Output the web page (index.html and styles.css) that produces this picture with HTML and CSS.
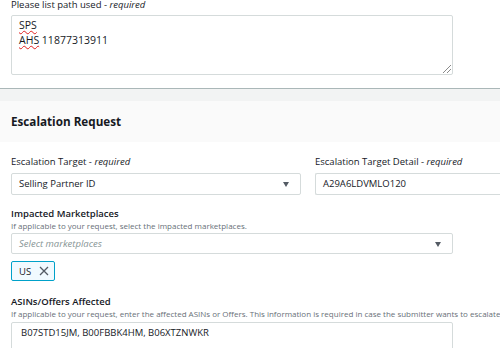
FILE: index.html
```html
<!DOCTYPE html>
<html lang="en">
<head>
    <meta charset="UTF-8">
    <title>Escalation</title>
    <link rel="stylesheet" href="styles.css">
</head>
<body>
<div class="top">
    <div class="label first">Please list path used - <i>required</i></div>
    <div class="textarea">
        <span class="typo">SPS</span><br>
        <span class="typo">AHS</span> 11877313911
        <span class="grip"></span>
    </div>
</div>
<div class="gap"></div>
<div class="panel">
    <div class="head">Escalation Request</div>
    <div class="body">
        <div class="row">
            <div class="field">
                <div class="label">Escalation Target - <i>required</i></div>
                <div class="select">Selling Partner ID<span class="caret"></span></div>
            </div>
            <div class="field detail">
                <div class="label">Escalation Target Detail - <i>required</i></div>
                <div class="input">A29A6LDVMLO120</div>
            </div>
        </div>
        <div class="label bold">Impacted Marketplaces</div>
        <div class="desc">If applicable to your request, select the impacted marketplaces.</div>
        <div class="select wide placeholder">Select marketplaces<span class="caret"></span></div>
        <div class="token">US
            <svg width="10" height="10" viewBox="0 0 10 10"><path d="M1 1L9 9M9 1L1 9" stroke="#545b64" stroke-width="1.3"/></svg>
        </div>
        <div class="label bold">ASINs/Offers Affected</div>
        <div class="desc">If applicable to your request, enter the affected ASINs or Offers. This information is required in case the submitter wants to escalate</div>
        <div class="input wide">B07STD15JM, B00FBBK4HM, B06XTZNWKR</div>
    </div>
</div>
</body>
</html>
```
FILE: styles.css
```css
body{
    margin: 0;
    background: #fff;
    font-family: "Open Sans", "Noto Sans", sans-serif;
    font-size: 9.5px;
    color: #16191f;
    overflow: hidden;
}
.top{
    padding: 0 11px;
    height: 88px;
    border-bottom: 1px solid #aab7b8;
}
.label{
    line-height: 12px;
    height: 12px;
    margin-top: -1px;
    white-space: nowrap;
}
.label.first{
    line-height: 10px;
    height: 10px;
    margin-top: 0;
}
.label i{
    font-style: italic;
}
.bold{
    font-weight: 600;
}
.textarea{
    position: relative;
    box-sizing: border-box;
    width: 442px;
    height: 60px;
    margin-top: 5px;
    border: 1px solid #d5dbdb;
    border-radius: 2px;
    padding: 2px 7px;
    font-size: 10.5px;
    line-height: 15px;
}
.typo{
    text-decoration: underline wavy #e02020;
    text-decoration-thickness: 1px;
    text-underline-offset: 1px;
}
.grip{
    position: absolute;
    right: 1px;
    bottom: 1px;
    width: 10px;
    height: 10px;
    background: repeating-linear-gradient(135deg, transparent 0 2px, #8a8a8a 2px 3px);
    clip-path: polygon(100% 0, 100% 100%, 0 100%);
}
.gap{
    height: 12px;
    background: #f2f3f3;
}
.panel{
    background: #fff;
    overflow: hidden;
}
.head{
    height: 41px;
    line-height: 41px;
    padding: 0 11px;
    background: #fafafa;
    font-size: 11.7px;
    font-weight: 700;
}
.body{
    padding: 14px 11px 0;
}
.row{
    display: flex;
    gap: 14px;
}
.field{
    width: 290px;
    flex: none;
}
.field.detail{
    width: 200px;
}
.select,
.input{
    position: relative;
    box-sizing: border-box;
    height: 22px;
    line-height: 20px;
    margin-top: 5px;
    border: 1px solid #d5dbdb;
    border-radius: 2px;
    padding: 0 7px;
    white-space: nowrap;
}
.input{
    border-right: none;
}
.wide{
    width: 442px;
}
.input.wide{
    border-right: 1px solid #d5dbdb;
    height: 30px;
    margin-top: 2px;
    padding: 0 9px;
}
.caret{
    position: absolute;
    right: 11px;
    top: 8px;
    border-left: 3px solid transparent;
    border-right: 3px solid transparent;
    border-top: 5px solid #545b64;
}
.placeholder{
    color: #879596;
    font-style: italic;
    margin-top: 1px;
    height: 21px;
}
.row .label{
    margin-top: 0;
}
.row + .label{
    margin-top: 13px;
}
.desc{
    font-size: 8px;
    line-height: 12px;
    color: #687078;
    white-space: nowrap;
}
.token{
    display: inline-flex;
    align-items: center;
    gap: 8px;
    box-sizing: border-box;
    height: 20px;
    margin-top: 7px;
    padding: 0 5px 0 7px;
    border: 1px solid #00a1c9;
    border-radius: 2px;
    background: #f1faff;
}
.token + .label{
    margin-top: 15px;
}
```
